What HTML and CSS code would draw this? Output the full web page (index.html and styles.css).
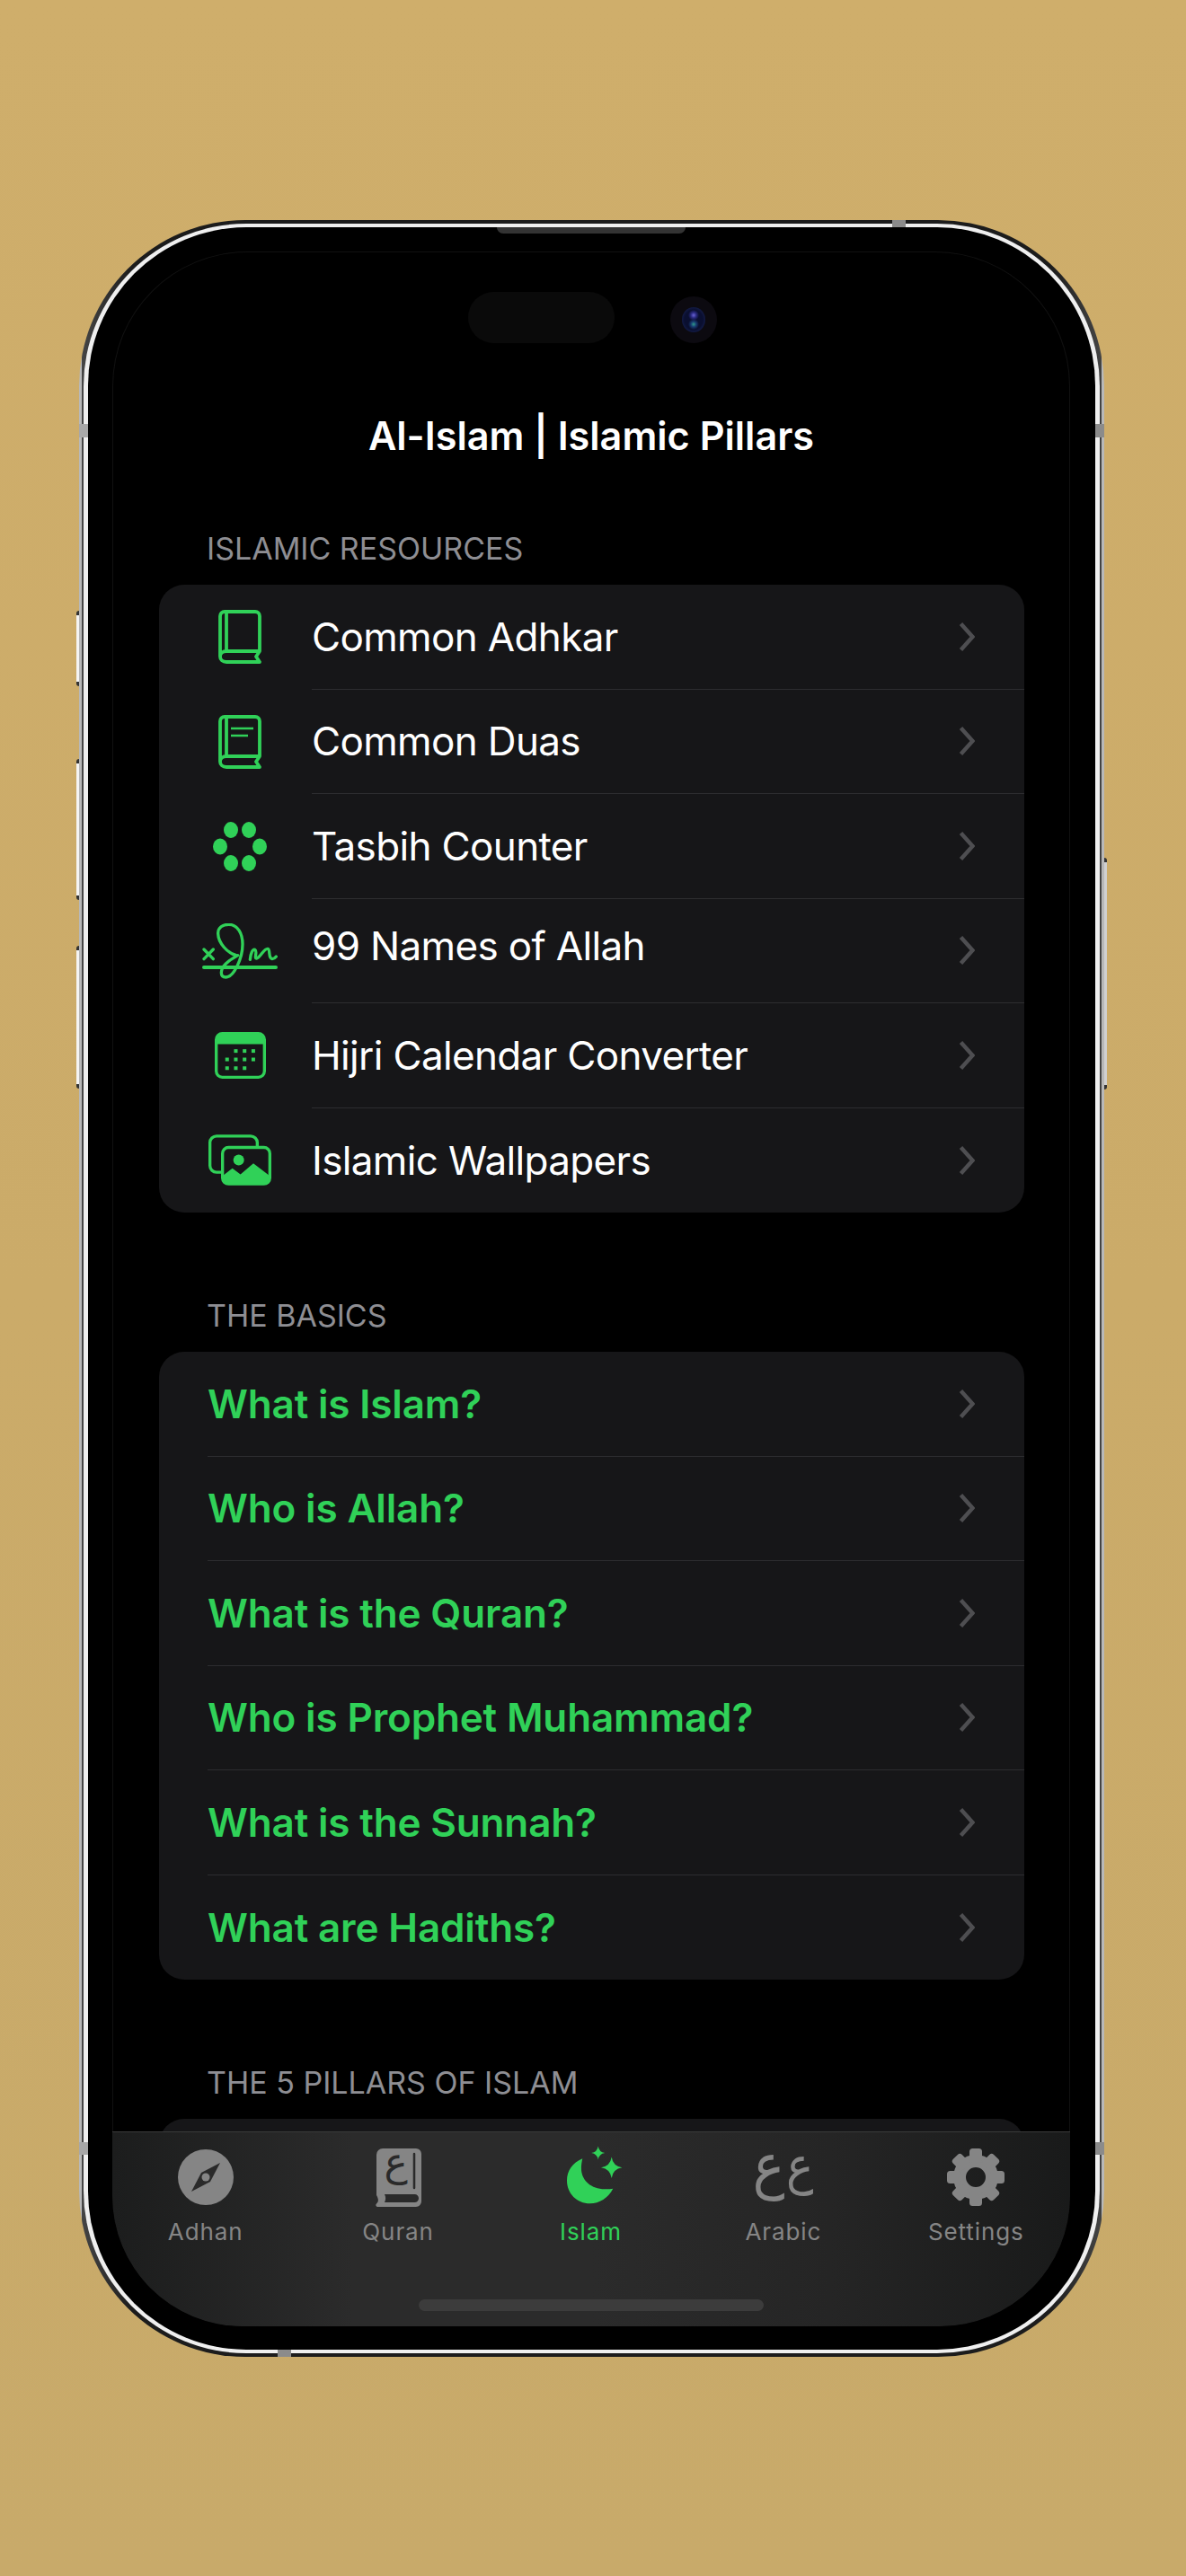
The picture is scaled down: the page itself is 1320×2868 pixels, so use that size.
FILE: index.html
```html
<!DOCTYPE html>
<html lang="en">
<head>
    <meta charset="UTF-8">
    <meta name="viewport" content="width=device-width, initial-scale=1.0">
    <title>Al-Islam | Islamic Pillars</title>
    <link rel="stylesheet" href="styles.css">
</head>
<body>
    <div class="phone">
        <span class="side-btn side-btn-mute"></span>
        <span class="side-btn side-btn-up"></span>
        <span class="side-btn side-btn-down"></span>
        <span class="side-btn side-btn-power"></span>
        <span class="band band-left-top"></span>
        <span class="band band-right-top"></span>
        <span class="band band-left-bottom"></span>
        <span class="band band-right-bottom"></span>
        <span class="band band-top"></span>
        <span class="band band-bottom"></span>

        <div class="phone-rim">
            <div class="phone-body">
                <span class="speaker"></span>

                <div class="screen">
                    <span class="island"></span>
                    <span class="camera"><span class="lens"></span></span>

                    <h1 class="nav-title">Al-Islam | Islamic Pillars</h1>

                    <h2 class="section-title">ISLAMIC RESOURCES</h2>
                    <ul class="card">
                        <li class="row">
                            <span class="row-icon">
                                <svg width="48" height="60" viewBox="0 0 48 60" fill="none" stroke="#30d158" stroke-width="3.8" stroke-linejoin="round">
                                    <path d="M2 52V7a5 5 0 0 1 5-5h34a5 5 0 0 1 5 5v39H9c-4 0-7 2.5-7 6s3 6 7 6h37l-4-6 4-6"/>
                                    <path d="M9 2v44"/>
                                </svg>
                            </span>
                            <span class="row-body">
                                <span class="row-label">Common Adhkar</span>
                                <svg class="chevron" width="18" height="34" viewBox="0 0 18 34"><path d="M2.5 2.5 15.5 17 2.5 31.5"/></svg>
                            </span>
                        </li>
                        <li class="row">
                            <span class="row-icon">
                                <svg width="48" height="60" viewBox="0 0 48 60" fill="none" stroke="#30d158" stroke-width="3.8" stroke-linejoin="round">
                                    <path d="M2 52V7a5 5 0 0 1 5-5h34a5 5 0 0 1 5 5v39H9c-4 0-7 2.5-7 6s3 6 7 6h37l-4-6 4-6"/>
                                    <path d="M9 2v44"/>
                                    <path stroke-width="2.5" d="M14 15h25M14 23h19"/>
                                </svg>
                            </span>
                            <span class="row-body">
                                <span class="row-label">Common Duas</span>
                                <svg class="chevron" width="18" height="34" viewBox="0 0 18 34"><path d="M2.5 2.5 15.5 17 2.5 31.5"/></svg>
                            </span>
                        </li>
                        <li class="row">
                            <span class="row-icon">
                                <svg width="60" height="55" viewBox="0 0 60 55" fill="#30d158">
                                    <ellipse cx="20" cy="9" rx="8" ry="9"/>
                                    <ellipse cx="40" cy="9" rx="8" ry="9"/>
                                    <ellipse cx="8" cy="27.500" rx="8" ry="9"/>
                                    <ellipse cx="52" cy="27.500" rx="8" ry="9"/>
                                    <ellipse cx="20" cy="46" rx="8" ry="9"/>
                                    <ellipse cx="40" cy="46" rx="8" ry="9"/>
                                </svg>
                            </span>
                            <span class="row-body">
                                <span class="row-label">Tasbih Counter</span>
                                <svg class="chevron" width="18" height="34" viewBox="0 0 18 34"><path d="M2.5 2.5 15.5 17 2.5 31.5"/></svg>
                            </span>
                        </li>
                        <li class="row">
                            <span class="row-icon">
                                <svg width="84" height="62" viewBox="46 145 252 186" fill="none" stroke="#30d158" stroke-width="10" stroke-linecap="round">
                                    <path stroke-width="12" d="M52 292H292"/>
                                    <path d="M52 232 83 264M83 232 52 264"/>
                                    <path d="M160 252C130 245 100 210 99 180 98 158 115 149 135 149 165 149 181 180 181 215 181 265 150 325 125 325 105 325 105 300 125 280 140 265 155 258 165 252"/>
                                    <path d="M206 266C208 245 215 230 222 233 232 238 218 262 228 262 240 260 252 228 265 230 275 232 265 262 280 264 286 264 290 260 293 256"/>
                                </svg>
                            </span>
                            <span class="row-body">
                                <span class="row-label row-label-raised">99 Names of Allah</span>
                                <svg class="chevron" width="18" height="34" viewBox="0 0 18 34"><path d="M2.5 2.5 15.5 17 2.5 31.5"/></svg>
                            </span>
                        </li>
                        <li class="row">
                            <span class="row-icon">
                                <svg width="57" height="52" viewBox="86 508 170 155" fill="#30d158">
                                    <rect x="91" y="513" width="160" height="145" rx="20" fill="none" stroke="#30d158" stroke-width="10"/>
                                    <path d="M91 548V533a20 20 0 0 1 20-20h120a20 20 0 0 1 20 20v15z"/>
                                    <rect x="150" y="565" width="12" height="12"/><rect x="179" y="565" width="12" height="12"/><rect x="208" y="565" width="12" height="12"/>
                                    <rect x="121" y="593" width="12" height="12"/><rect x="150" y="593" width="12" height="12"/><rect x="179" y="593" width="12" height="12"/><rect x="208" y="593" width="12" height="12"/>
                                    <rect x="121" y="622" width="12" height="12"/><rect x="150" y="622" width="12" height="12"/><rect x="179" y="622" width="12" height="12"/>
                                </svg>
                            </span>
                            <span class="row-body">
                                <span class="row-label">Hijri Calendar Converter</span>
                                <svg class="chevron" width="18" height="34" viewBox="0 0 18 34"><path d="M2.5 2.5 15.5 17 2.5 31.5"/></svg>
                            </span>
                        </li>
                        <li class="row">
                            <span class="row-icon">
                                <svg width="70" height="57" viewBox="65 852 210 170" fill="none" stroke="#30d158" stroke-width="10">
                                    <path d="M108 978H92a22 22 0 0 1-22-22V879a22 22 0 0 1 22-22h114a22 22 0 0 1 22 22v14"/>
                                    <rect x="112" y="895" width="158" height="122" rx="20"/>
                                    <circle cx="166" cy="937" r="18" fill="#30d158" stroke="none"/>
                                    <path fill="#30d158" stroke="none" d="M112 990 145 965 172 985 215 948 270 990V1000a17 17 0 0 1-17 17H129a17 17 0 0 1-17-17z"/>
                                </svg>
                            </span>
                            <span class="row-body">
                                <span class="row-label">Islamic Wallpapers</span>
                                <svg class="chevron" width="18" height="34" viewBox="0 0 18 34"><path d="M2.5 2.5 15.5 17 2.5 31.5"/></svg>
                            </span>
                        </li>
                    </ul>

                    <h2 class="section-title section-title-next">THE BASICS</h2>
                    <ul class="card card-text">
                        <li class="row"><span class="row-body"><span class="row-label row-label-green">What is Islam?</span><svg class="chevron" width="18" height="34" viewBox="0 0 18 34"><path d="M2.5 2.5 15.5 17 2.5 31.5"/></svg></span></li>
                        <li class="row"><span class="row-body"><span class="row-label row-label-green">Who is Allah?</span><svg class="chevron" width="18" height="34" viewBox="0 0 18 34"><path d="M2.5 2.5 15.5 17 2.5 31.5"/></svg></span></li>
                        <li class="row"><span class="row-body"><span class="row-label row-label-green">What is the Quran?</span><svg class="chevron" width="18" height="34" viewBox="0 0 18 34"><path d="M2.5 2.5 15.5 17 2.5 31.5"/></svg></span></li>
                        <li class="row"><span class="row-body"><span class="row-label row-label-green">Who is Prophet Muhammad?</span><svg class="chevron" width="18" height="34" viewBox="0 0 18 34"><path d="M2.5 2.5 15.5 17 2.5 31.5"/></svg></span></li>
                        <li class="row"><span class="row-body"><span class="row-label row-label-green">What is the Sunnah?</span><svg class="chevron" width="18" height="34" viewBox="0 0 18 34"><path d="M2.5 2.5 15.5 17 2.5 31.5"/></svg></span></li>
                        <li class="row"><span class="row-body"><span class="row-label row-label-green">What are Hadiths?</span><svg class="chevron" width="18" height="34" viewBox="0 0 18 34"><path d="M2.5 2.5 15.5 17 2.5 31.5"/></svg></span></li>
                    </ul>

                    <h2 class="section-title section-title-next">THE 5 PILLARS OF ISLAM</h2>
                    <div class="card card-peek"></div>

                    <nav class="tabbar">
                        <div class="tabs">
                            <a class="tab">
                                <span class="tab-icon">
                                    <svg width="64" height="64" viewBox="-32 -32 64 64">
                                        <circle r="31" fill="#858585"/>
                                        <path fill="#2a2a2a" d="M16-16 5 5-16 16-5-5z"/>
                                        <circle r="4.5" fill="#858585"/>
                                    </svg>
                                </span>
                                <span class="tab-label">Adhan</span>
                            </a>
                            <a class="tab">
                                <span class="tab-icon">
                                    <span class="quran-book">
                                        <svg width="51" height="65" viewBox="0 0 51 65">
                                            <path fill="#858585" d="M8 0H45a6 6 0 0 1 6 6V59a6 6 0 0 1-6 6H2a2 2 0 0 1-1-3.5C3 60 4 57 1 52V7a7 7 0 0 1 7-7z"/>
                                            <path fill="#2a2a2a" d="M10 51H43.5a4.5 4.5 0 0 1 0 9H10C11.5 57 11.5 54 10 51z"/>
                                            <path stroke="#2a2a2a" stroke-width="2.5" stroke-linecap="round" d="M43 6V44"/>
                                        </svg>
                                        <span class="quran-letter">&#1593;</span>
                                    </span>
                                </span>
                                <span class="tab-label">Quran</span>
                            </a>
                            <a class="tab tab-active">
                                <span class="tab-icon">
                                    <svg width="80" height="70" viewBox="-3 3 80 70" fill="#30d158">
                                        <path d="M28.3 17.3C17 22 11 31 11 41.7 11 56 22 67.3 36.7 67.3 47 67.3 57 61 62.3 50.7 60 51 56 51.5 53 51.3 38 51 28 42 27 30 26.7 25 27.5 21 28.3 17.3z"/>
                                        <path d="M45.7 3.5Q46.7 10 53.2 11 46.7 12 45.7 18.5 44.7 12 38.2 11 44.7 10 45.7 3.5z"/>
                                        <path d="M60.7 15.6Q62.2 25.8 72.4 27.3 62.2 28.8 60.7 39 59.2 28.8 49 27.3 59.2 25.8 60.7 15.6z"/>
                                    </svg>
                                </span>
                                <span class="tab-label">Islam</span>
                            </a>
                            <a class="tab">
                                <span class="tab-icon tab-icon-letters">
                                    <span class="letter-big">&#1593;</span><span class="letter-small">&#1593;</span>
                                </span>
                                <span class="tab-label">Arabic</span>
                            </a>
                            <a class="tab">
                                <span class="tab-icon">
                                    <svg width="64" height="64" viewBox="-32 -32 64 64" fill="#858585">
                                        <defs><rect id="tooth" x="-7" y="-32" width="14" height="16" rx="3.5"/></defs>
                                        <circle r="18" fill="none" stroke="#858585" stroke-width="14"/>
                                        <use href="#tooth"/>
                                        <use href="#tooth" transform="rotate(45)"/>
                                        <use href="#tooth" transform="rotate(90)"/>
                                        <use href="#tooth" transform="rotate(135)"/>
                                        <use href="#tooth" transform="rotate(180)"/>
                                        <use href="#tooth" transform="rotate(225)"/>
                                        <use href="#tooth" transform="rotate(270)"/>
                                        <use href="#tooth" transform="rotate(315)"/>
                                    </svg>
                                </span>
                                <span class="tab-label">Settings</span>
                            </a>
                        </div>
                        <span class="home-bar"></span>
                    </nav>
                </div>
            </div>
        </div>
    </div>
</body>
</html>
```

FILE: styles.css
```css
/* Page background */
html, body {
    margin: 0;
    height: 100%;
}

body {
    background: linear-gradient(180deg, #cfae6b 0%, #cbab69 50%, #c8aa6a 100%);
    font-family: Inter, "Noto Sans", sans-serif;
    padding: 245px 0 0 88px;
    box-sizing: border-box;
    overflow: hidden;
}

/* Phone frame */
.phone {
    position: relative;
    width: 1141px;
    height: 2379px;
    box-sizing: border-box;
    padding: 4px 5px;
    border-radius: 185px;
    background: linear-gradient(90deg, #b8b8b8 0, #b8b8b8 3px, #444 3.5px, #1c1c1c 60px, #1c1c1c 1081px, #444 1137.5px, #b8b8b8 1138px, #b8b8b8 100%);
}

.phone-rim {
    height: 100%;
    box-sizing: border-box;
    padding: 4px 5px;
    border-radius: 181px;
    background: #efefef;
}

.phone-body {
    position: relative;
    height: 100%;
    box-sizing: border-box;
    padding: 27px 28px 26px 27px;
    border-radius: 176px;
    background: #000;
}

/* Buttons and antenna bands */
.side-btn {
    position: absolute;
    width: 3px;
    background: #f4f4f4;
    border-top: 5px solid #333;
    border-bottom: 5px solid #333;
    box-sizing: border-box;
}

.side-btn-mute { left: -3px; top: 435px; height: 84px; border-radius: 3px 0 0 3px; }
.side-btn-up { left: -3px; top: 600px; height: 157px; border-radius: 3px 0 0 3px; }
.side-btn-down { left: -3px; top: 808px; height: 159px; border-radius: 3px 0 0 3px; }
.side-btn-power { right: -3px; top: 710px; height: 258px; border-radius: 0 3px 3px 0; background: #d0d0d0; }

.band {
    position: absolute;
    background: #8b8b8b;
    z-index: 1;
}

.band-left-top { left: 0; top: 227px; width: 10px; height: 15px; background: #a8a8a8; }
.band-right-top { right: 0; top: 227px; width: 10px; height: 15px; }
.band-left-bottom { left: 0; top: 2140px; width: 10px; height: 14px; background: #a8a8a8; }
.band-right-bottom { right: 0; top: 2140px; width: 10px; height: 14px; }
.band-top { left: 905px; top: 0; width: 15px; height: 8px; }
.band-bottom { left: 221px; bottom: 0; width: 15px; height: 8px; }

.speaker {
    position: absolute;
    left: 455px;
    top: 0;
    width: 210px;
    height: 7px;
    background: #333;
    border-radius: 0 0 8px 8px;
}

/* Screen */
.screen {
    position: relative;
    height: 100%;
    overflow: hidden;
    background: #000;
    box-shadow: inset 0 0 0 1px #111;
    border-radius: 150px 150px 145px 145px;
}

.island {
    position: absolute;
    left: 396px;
    top: 45px;
    width: 163px;
    height: 57px;
    border-radius: 29px;
    background: #0a0a0a;
}

.camera {
    position: absolute;
    left: 621px;
    top: 50px;
    width: 52px;
    height: 52px;
    border-radius: 50%;
    background: #0c0a10;
    display: flex;
    align-items: center;
    justify-content: center;
}

.lens {
    width: 26px;
    height: 28px;
    border-radius: 50%;
    background:
        radial-gradient(circle at 50% 32%, #6a63d6 0, #2a2a80 3px, transparent 6px),
        radial-gradient(circle at 50% 68%, #2f9a8a 0, #173a70 3px, transparent 6px),
        radial-gradient(ellipse at center, #0a0f30 0, #0a0f30 55%, #121a44 70%, #10142c 100%);
}

.nav-title {
    margin: 0;
    padding-top: 170px;
    line-height: 70px;
    font-size: 43.2px;
    font-weight: 600;
    color: #fff;
    text-align: center;
}

/* Lists */
.section-title {
    margin: 71px 0 20px 105px;
    line-height: 40px;
    font-size: 34px;
    font-weight: 400;
    color: #8e8e93;
}

.section-title-next {
    margin-top: 95px;
}

.card {
    list-style: none;
    margin: 0 51px 0 52px;
    padding: 0;
    background: #161618;
    border-radius: 28px;
    overflow: hidden;
}

.card-peek {
    height: 120px;
}

.row {
    display: flex;
    align-items: stretch;
    height: 116.5px;
    padding-left: 30px;
}

.card-text .row {
    padding-left: 54px;
}

.row-icon {
    flex: none;
    width: 120px;
    margin-right: 20px;
    display: flex;
    align-items: center;
    justify-content: center;
}

.row-body {
    flex: 1;
    display: flex;
    align-items: center;
    justify-content: space-between;
    padding-right: 55px;
    border-bottom: 1px solid #2d2d30;
}

.row:last-child .row-body {
    border-bottom: none;
}

.row-label {
    font-size: 44px;
    font-weight: 400;
    letter-spacing: -0.65px;
    color: #fff;
}

.row-label-raised {
    padding-bottom: 11px;
}

.row-label-green {
    font-weight: 600;
    letter-spacing: -0.15px;
    color: #30d158;
}

.chevron {
    flex: none;
    fill: none;
    stroke: #4e4e51;
    stroke-width: 4.5;
}

/* Bottom tabs */
.tabbar {
    position: absolute;
    left: 0;
    right: 0;
    bottom: 0;
    height: 217px;
    box-sizing: border-box;
    padding-top: 15px;
    border-top: 1px solid #3a3b3b;
    border-radius: 0 0 145px 145px;
    background: linear-gradient(90deg, #1c1d1d 0%, #2b2b2b 25%, #2b2b2b 50%, #252525 75%, #191a1a 100%);
    display: flex;
    flex-direction: column;
    align-items: center;
}

.tabs {
    display: grid;
    grid-template-columns: repeat(5, 1fr);
    width: 1072px;
    margin-left: -1px;
}

.tab {
    display: flex;
    flex-direction: column;
    align-items: center;
    color: #858585;
}

.tab-active {
    color: #30d158;
}

.tab-icon {
    height: 70px;
    display: flex;
    align-items: center;
    justify-content: center;
}

.tab-label {
    margin-top: 11px;
    line-height: 30px;
    font-size: 26px;
    font-weight: 400;
    letter-spacing: 0.9px;
}

.quran-book {
    position: relative;
    display: block;
    width: 51px;
    height: 65px;
}

.quran-letter {
    position: absolute;
    left: 0;
    top: -7px;
    width: 46px;
    text-align: center;
    line-height: 44px;
    font-family: "DejaVu Sans", sans-serif;
    font-size: 44px;
    color: #2a2a2a;
}

.tab-icon-letters {
    font-family: "DejaVu Sans", sans-serif;
    color: #858585;
    gap: 2px;
    padding-bottom: 26px;
    height: 44px;
    transform: scaleX(0.88);
}

.letter-big {
    font-size: 68px;
    line-height: 56px;
}

.letter-small {
    font-size: 58px;
    line-height: 56px;
}

.home-bar {
    margin-top: 60px;
    width: 384px;
    height: 13px;
    border-radius: 7px;
    background: #3c3c3c;
}
```
